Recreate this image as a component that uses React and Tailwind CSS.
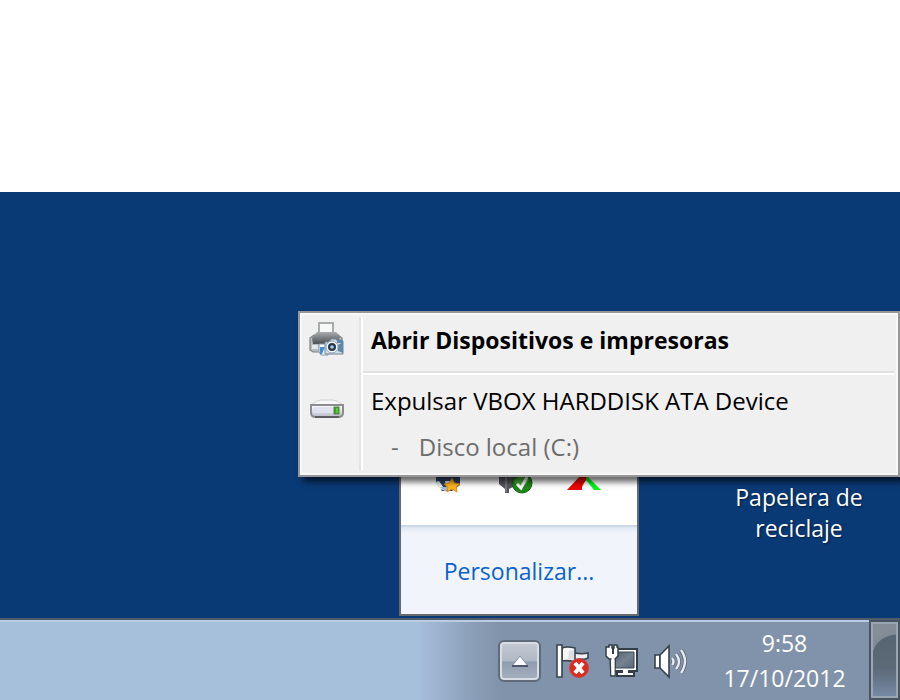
import React from "react";

function PrinterIcon() {
  return (
    <svg width="36" height="36" viewBox="0 0 36 36" aria-hidden="true">
      <defs>
        <linearGradient id="printerTop" x1="0" y1="0" x2="0" y2="1">
          <stop offset="0" stopColor="#a9abac" />
          <stop offset="1" stopColor="#4c5053" />
        </linearGradient>
      </defs>
      <path d="M10 2h14v12H10z" fill="#f7f8f8" stroke="#a8abac" strokeWidth="2" />
      <path d="M5 14h24l4 3v12l-3 2H4l-3-2V17z" fill="#b9bdc0" stroke="#7d8184" strokeWidth="1.2" />
      <path d="M8 11h19l4 4-2 8H4l-1-6z" fill="url(#printerTop)" />
      <path d="M3 24h6v4H3z" fill="#e4e7e9" />
      <path d="M10 23h9v11h-7l-2-3z" fill="#f4f8fb" stroke="#8c969e" />
      <path d="M11 26h5l-3 7h-2z" fill="#3f8fd8" />
      <path d="M16 21h4l2-3h5l2 3 5-1v13H16z" fill="#d3dee6" stroke="#728495" strokeWidth="1" />
      <path d="M28 18l6 1v3h-6zM29 24l5-3v11l-5-2z" fill="#5c88ab" />
      <circle cx="23" cy="26" r="6" fill="#f6f9fb" stroke="#93a4b1" />
      <circle cx="23" cy="26" r="4" fill="#27394b" />
      <circle cx="23" cy="26" r="1.8" fill="#9fd0ee" />
    </svg>
  );
}

function DriveIcon() {
  return (
    <svg width="36" height="24" viewBox="0 0 36 24" aria-hidden="true">
      <defs>
        <linearGradient id="driveFace" x1="0" y1="0" x2="0" y2="1">
          <stop offset="0" stopColor="#fdfdfe" />
          <stop offset="1" stopColor="#b9bdc9" />
        </linearGradient>
      </defs>
      <path d="M2 8Q8 3 12 3h12q4 0 10 5z" fill="#f7f7f8" stroke="#cfd0d1" />
      <path d="M2 8h32v8q0 4-5 4H7q-5 0-5-4z" fill="url(#driveFace)" stroke="#8b8c8f" strokeWidth="2" />
      <path d="M5 10h19v6H5z" fill="#dfe1ef" />
      <path d="M6 20h24" stroke="#5c5d60" strokeWidth="2" />
      <rect x="25" y="10" width="5" height="7" fill="#37a916" stroke="#5e7b54" />
      <path d="M28 11v5" stroke="#79ea4d" />
    </svg>
  );
}

function StarIcon() {
  return (
    <svg width="30" height="36" viewBox="0 0 30 36" aria-hidden="true">
      <path d="M3 14h24v13l-8 6H9l-6-8z" fill="#2d4163" />
      <path d="M2 24l5 7 6 2-7-10zM12 23l2 7 5-7z" fill="#e7ecf2" />
      <path d="M7 29l5 4 5-1-1-3z" fill="#a8b4c8" />
      <path d="M19 20l2.5 5 5.5 1-4 3 1 5-5-3-5 3 1-5-4-3 5-1z" fill="#ffb51f" stroke="#d48d1d" />
    </svg>
  );
}

function SafeRemoveIcon() {
  return (
    <svg width="36" height="36" viewBox="0 0 36 36" aria-hidden="true">
      <path d="M2 10h16v18l-6 3v4H8v-4l-6-5z" fill="#55555b" />
      <path d="M9 11v23" stroke="#777780" strokeWidth="2" />
      <circle cx="25" cy="25" r="10" fill="#20851d" stroke="#13640e" />
      <path d="M17 23q7-8 15-1l-3 4-9 2z" fill="#4aae3c" />
      <path d="M20 26l4 4 6-11" fill="none" stroke="#fff" strokeWidth="3" />
    </svg>
  );
}

function ArrowsIcon() {
  return (
    <svg width="34" height="36" viewBox="0 0 34 36" aria-hidden="true">
      <path d="M0 32L14 17h6v4l-3 4-2 4v3z" fill="#ed0000" />
      <path d="M19 17l15 15h-7l-4-5-4-5z" fill="#00f51c" />
    </svg>
  );
}

function FlagIcon() {
  return (
    <svg width="34" height="36" viewBox="0 0 34 36" aria-hidden="true">
      <path d="M17 9q7 3 15 1v5q-4 2-6 1l-9 2z" fill="#f0f1f3" stroke="#3a434d" strokeWidth="1.6" />
      <path d="M6 5q5-2 13 0v14q-7-2-13-1z" fill="#f5f6f7" stroke="#3a434d" strokeWidth="1.6" />
      <path d="M13 8l5-1v10l-6-1z" fill="#dcdfe2" />
      <path d="M1 2h5v32H1z" fill="#fff" stroke="#3a434d" strokeWidth="1.6" />
      <circle cx="23" cy="25" r="9.5" fill="#df291f" stroke="#c04a46" />
      <path d="M19 20l8 10M27 20l-8 10" stroke="#fff" strokeWidth="4" />
    </svg>
  );
}

function NetworkIcon() {
  return (
    <svg width="34" height="36" viewBox="0 0 34 36" aria-hidden="true">
      <defs>
        <linearGradient id="screen" x1="0" y1="0" x2="1" y2="1">
          <stop offset="0" stopColor="#53606e" />
          <stop offset="0.5" stopColor="#76828f" />
          <stop offset="1" stopColor="#58677a" />
        </linearGradient>
      </defs>
      <path d="M9 6h23v22h-8v1h5v4H12v-4h5v-1H9z" fill="#fff" stroke="#343e49" strokeWidth="2" />
      <path d="M10 9h19v16H10z" fill="url(#screen)" stroke="#3b4652" />
      <path d="M5 15h5v18H6z" fill="#fff" stroke="#343e49" strokeWidth="1.5" />
      <path d="M1 4h3V2h3v3h2V2h3v2h1v9l-3 3H4l-3-3z" fill="#fff" stroke="#343e49" strokeWidth="1.5" />
      <path d="M8 4v7" stroke="#343e49" strokeWidth="2" />
      <path d="M8 14v18" stroke="#fff" strokeWidth="3" />
    </svg>
  );
}

function SpeakerIcon() {
  return (
    <svg width="34" height="36" viewBox="0 0 34 36" aria-hidden="true">
      <path d="M1 12h5v13H1z" fill="#fff" stroke="#36414d" strokeWidth="1.6" />
      <path d="M6 12l9-9v31l-9-9z" fill="#fff" stroke="#36414d" strokeWidth="1.6" />
      <g fill="none" stroke="#5a6775" strokeWidth="4">
        <path d="M18 15q3 4 0 7" />
        <path d="M22 11q6 8 0 15" />
        <path d="M27 7q8 11 0 23" />
      </g>
      <g fill="none" stroke="#e6eaf0" strokeWidth="2.4">
        <path d="M18 15q3 4 0 7" />
        <path d="M22 11q6 8 0 15" />
        <path d="M27 7q8 11 0 23" />
      </g>
    </svg>
  );
}

function ContextMenu() {
  return (
    <div
      role="menu"
      className="absolute top-[119px] right-0 z-20 flex h-[166px] w-[602px] border-2 border-[#979797] bg-[#f0f0f0] p-1 shadow-[5px_5px_6px_rgba(0,0,0,0.6)] ring-2 ring-inset ring-[#f8f8f8]"
    >
      <div className="flex w-[57px] shrink-0 flex-col items-start gap-10 border-r-2 border-[#e2e3e3] pt-1 pl-[5px]">
        <PrinterIcon />
        <DriveIcon />
      </div>
      <div className="flex flex-1 flex-col border-l-2 border-white text-left">
        <button role="menuitem" className="h-[54px] pb-2 pl-2 text-left text-[23px] leading-[32px] font-bold">
          Abrir Dispositivos e impresoras
        </button>
        <div className="h-1 shrink-0 border-t-2 border-b-2 border-t-[#e0e0e0] border-b-white" />
        <button role="menuitem" className="h-[52px] pl-2 text-left text-[24px] leading-[32px]">
          Expulsar VBOX HARDDISK ATA Device
        </button>
        <button role="menuitem" disabled className="flex h-[40px] gap-5 pl-7 text-[24px] leading-[40px] text-[#6d6d6d]">
          <span>-</span>
          <span>Disco local (C:)</span>
        </button>
      </div>
    </div>
  );
}

function TrayPopup() {
  return (
    <div className="absolute right-[261px] bottom-[2px] flex h-[168px] w-[240px] flex-col border-2 border-[#68696c] bg-white">
      <div className="flex h-[75px] items-start justify-between pt-2 pr-9 pl-8">
        <StarIcon />
        <SafeRemoveIcon />
        <ArrowsIcon />
      </div>
      <div className="flex flex-1 items-center justify-center border-t-2 border-[#ccd9ea] bg-[#f1f5fb] shadow-[inset_0_5px_5px_-3px_#d8e1ed]">
        <a href="#personalizar" className="text-[23px] leading-[32px] text-[#0a63cc]">Personalizar...</a>
      </div>
    </div>
  );
}

function Taskbar() {
  return (
    <footer className="flex h-[82px] shrink-0 border-t-2 border-[#505d69] bg-[linear-gradient(to_right,#a6c0dc_calc(100%-484px),#9fb4d2_calc(100%-464px),#8da1bb_calc(100%-432px),#8193aa_calc(100%-400px))] shadow-[inset_0_2px_0_#b9cce0]">
      <div className="flex flex-1 items-center justify-end gap-[15px] pt-[2px]">
        <button
          aria-label="Mostrar iconos ocultos"
          className="flex h-[42px] w-[43px] items-center justify-center rounded-md border-2 border-[#5f6b7a] bg-[linear-gradient(#c4cad3,#b0b8c5_50%,#909dae_52%,#a5b0be)] shadow-[inset_0_0_0_2px_#d6dde5]"
        >
          <svg width="20" height="14" viewBox="0 0 20 14" aria-hidden="true">
            <path d="M2 12L10 2l8 10z" fill="#fff" stroke="#8088a0" />
            <path d="M2 12h16" stroke="#50566f" strokeWidth="2" />
          </svg>
        </button>
        <FlagIcon />
        <NetworkIcon />
        <SpeakerIcon />
      </div>
      <time dateTime="2012-10-17T09:58" className="flex w-[181px] shrink-0 flex-col items-center justify-center pt-[2px] pl-3 text-[23px] leading-[35px] text-white">
        <span>9:58</span>
        <span>17/10/2012</span>
      </time>
      <button
        aria-label="Mostrar escritorio"
        className="w-[31px] shrink-0 border-2 border-[#4a5562] bg-[radial-gradient(ellipse_26px_22px_at_100%_34px,transparent_96%,rgba(170,176,184,0.5)_100%,rgba(170,176,184,0.55)_130%),linear-gradient(#566370,#5c6977_60%,#778ba6)] [background-size:100%_34px,100%_100%] bg-no-repeat shadow-[inset_0_0_0_2px_#9aa6b3]"
      />
    </footer>
  );
}

export default function App() {
  return (
    <main className="flex min-h-screen flex-col bg-white font-['Open_Sans','Noto_Sans',sans-serif]">
      <div className="h-48 shrink-0" />
      <section className="relative min-h-[426px] flex-1 bg-[#0a3a75]">
        <ContextMenu />
        <TrayPopup />
        <a
          href="#papelera"
          className="absolute top-[290px] right-[21px] w-40 text-center text-[23px] leading-[31px] text-white [text-shadow:1px_1px_2px_#001c44]"
        >
          Papelera de reciclaje
        </a>
      </section>
      <Taskbar />
    </main>
  );
}
